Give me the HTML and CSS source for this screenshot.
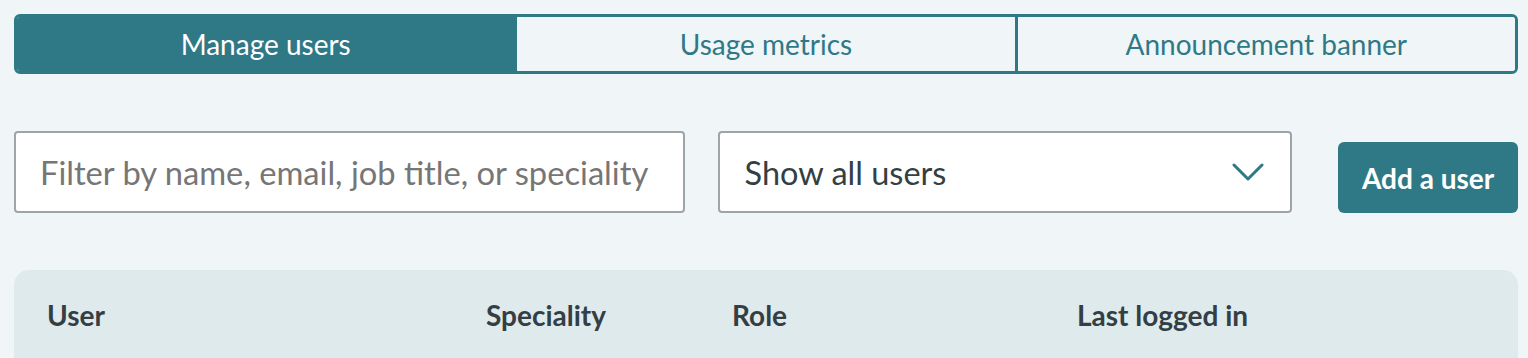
FILE: index.html
```html
<!DOCTYPE html>
<html lang="en">
<head>
    <meta charset="UTF-8">
    <meta name="viewport" content="width=device-width, initial-scale=1.0">
    <title>Admin - Manage users</title>
    <link rel="stylesheet" href="styles.css">
</head>
<body>
    <div class="tabs">
        <button class="tab active">Manage users</button>
        <button class="tab">Usage metrics</button>
        <button class="tab">Announcement banner</button>
    </div>

    <div class="controls">
        <input type="text" class="filter-input" placeholder="Filter by name, email, job title, or speciality">
        <div class="select-box">
            <span>Show all users</span>
            <svg class="chevron" width="32" height="18" viewBox="0 0 32 18">
                <path d="M2 2 L16 16 L30 2" fill="none" stroke="#2f7986" stroke-width="3" stroke-linecap="round" stroke-linejoin="round"/>
            </svg>
        </div>
        <button class="add-btn">Add a user</button>
    </div>

    <div class="user-table">
        <div class="table-head">
            <div>User</div>
            <div>Speciality</div>
            <div>Role</div>
            <div>Last logged in</div>
        </div>
    </div>
</body>
</html>
```

FILE: styles.css
```css
body {
    font-family: Lato, "Open Sans", sans-serif;
    margin: 0;
    padding: 14px 10px 0 14px;
    background-color: #f0f5f8;
    color: #333f44;
}
.tabs {
    display: flex;
    height: 60px;
    box-sizing: border-box;
    border: 3px solid #2f7986;
    border-radius: 6px;
    overflow: hidden;
}
.tab {
    flex: 1;
    font-family: inherit;
    font-size: 28px;
    color: #2f7986;
    background-color: #f0f5f8;
    border: none;
    border-left: 3px solid #2f7986;
    padding: 0;
    cursor: pointer;
}
.tab:first-child {
    border-left: none;
}
.tab.active {
    background-color: #2f7986;
    color: #fff;
}
.controls {
    display: flex;
    align-items: flex-end;
    margin-top: 57px;
}
.filter-input {
    width: 671px;
    height: 82px;
    box-sizing: border-box;
    border: 2px solid #9ea5a8;
    border-radius: 4px;
    background-color: #fff;
    padding: 0 24px;
    font-family: inherit;
    font-size: 32.7px;
    color: #333f44;
}
.filter-input::placeholder {
    color: #767676;
}
.select-box {
    width: 575px;
    height: 82px;
    box-sizing: border-box;
    margin-left: 33px;
    border: 2px solid #9ea5a8;
    border-radius: 4px;
    background-color: #fff;
    padding: 0 26px 0 25px;
    display: flex;
    align-items: center;
    justify-content: space-between;
    font-size: 32.5px;
    color: #333f44;
}
.add-btn {
    margin-left: 46px;
    width: 180px;
    height: 71px;
    border: none;
    border-radius: 6px;
    background-color: #2f7986;
    color: #fff;
    font-family: inherit;
    font-weight: bold;
    font-size: 28px;
    cursor: pointer;
}
.user-table {
    margin-top: 57px;
    background-color: #dfeaec;
    border-radius: 15px 15px 0 0;
    height: 89px;
}
.table-head {
    display: grid;
    grid-template-columns: 439px 246px 345px 1fr;
    padding: 28px 0 0 33px;
    font-weight: bold;
    font-size: 28px;
    color: #333f44;
}
```
